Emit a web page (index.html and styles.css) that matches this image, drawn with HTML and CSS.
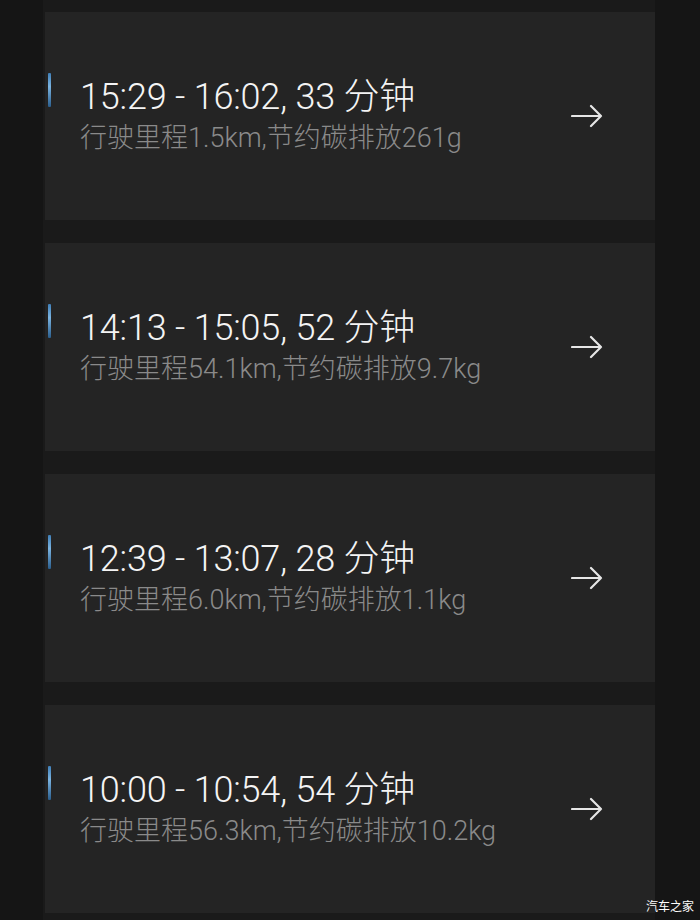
FILE: index.html
```html
<!DOCTYPE html>
<html lang="zh-CN">

<head>
  <meta charset="UTF-8" />
  <meta name="viewport" content="width=device-width, initial-scale=1.0" />
  <title>行程记录</title>
  <link rel="stylesheet" href="styles.css">
</head>

<body>
  <main class="trip-list">
    <div class="trip-card">
      <span class="marker"></span>
      <div class="trip-info">
        <div class="trip-time">15:29 - 16:02, 33 分钟</div>
        <div class="trip-detail">行驶里程1.5km,节约碳排放261g</div>
      </div>
      <svg class="arrow" width="32" height="24" viewBox="0 0 32 24">
        <path d="M1 12 H30 M20 2 L30 12 L20 22" />
      </svg>
    </div>

    <div class="trip-card">
      <span class="marker"></span>
      <div class="trip-info">
        <div class="trip-time">14:13 - 15:05, 52 分钟</div>
        <div class="trip-detail">行驶里程54.1km,节约碳排放9.7kg</div>
      </div>
      <svg class="arrow" width="32" height="24" viewBox="0 0 32 24">
        <path d="M1 12 H30 M20 2 L30 12 L20 22" />
      </svg>
    </div>

    <div class="trip-card">
      <span class="marker"></span>
      <div class="trip-info">
        <div class="trip-time">12:39 - 13:07, 28 分钟</div>
        <div class="trip-detail">行驶里程6.0km,节约碳排放1.1kg</div>
      </div>
      <svg class="arrow" width="32" height="24" viewBox="0 0 32 24">
        <path d="M1 12 H30 M20 2 L30 12 L20 22" />
      </svg>
    </div>

    <div class="trip-card">
      <span class="marker"></span>
      <div class="trip-info">
        <div class="trip-time">10:00 - 10:54, 54 分钟</div>
        <div class="trip-detail">行驶里程56.3km,节约碳排放10.2kg</div>
      </div>
      <svg class="arrow" width="32" height="24" viewBox="0 0 32 24">
        <path d="M1 12 H30 M20 2 L30 12 L20 22" />
      </svg>
    </div>
  </main>

  <div class="watermark">汽车之家</div>
</body>

</html>
```

FILE: styles.css
```css
body {
  margin: 0;
  padding: 0;
  background-color: #151515;
  font-family: Roboto, "Noto Sans CJK SC", sans-serif;
  height: 920px;
  overflow: hidden;
}

.trip-list {
  margin-left: 43px;
  width: 612px;
  padding: 12px 0 0 2px;
  box-sizing: border-box;
  background-color: #1a1a1a;
  display: flex;
  flex-direction: column;
  gap: 23px;
  height: 920px;
}

.trip-card {
  height: 208px;
  background-color: #242424;
  display: flex;
  align-items: center;
}

.marker {
  width: 3px;
  height: 34px;
  margin-left: 3px;
  margin-bottom: 52px;
  background: linear-gradient(#3f7fb8, #7ab3e0 40%, #2b5f8e);
  border-radius: 1px;
}

.trip-info {
  flex: 1;
  margin-left: 29px;
}

.trip-time {
  color: #f4f4f4;
  font-size: 36px;
  font-weight: 300;
  letter-spacing: -0.2px;
  line-height: 42px;
}

.trip-detail {
  color: #8a8a8a;
  font-size: 27px;
  font-weight: 300;
  line-height: 36px;
  margin-top: 2px;
}

.arrow {
  margin-right: 52px;
  fill: none;
  stroke: #e6e6e6;
  stroke-width: 2.2;
  stroke-linecap: round;
  stroke-linejoin: round;
}

.watermark {
  position: absolute;
  right: 6px;
  bottom: 6px;
  color: #ffffff;
  font-size: 12px;
  font-family: "Noto Sans CJK SC", sans-serif;
}
```
